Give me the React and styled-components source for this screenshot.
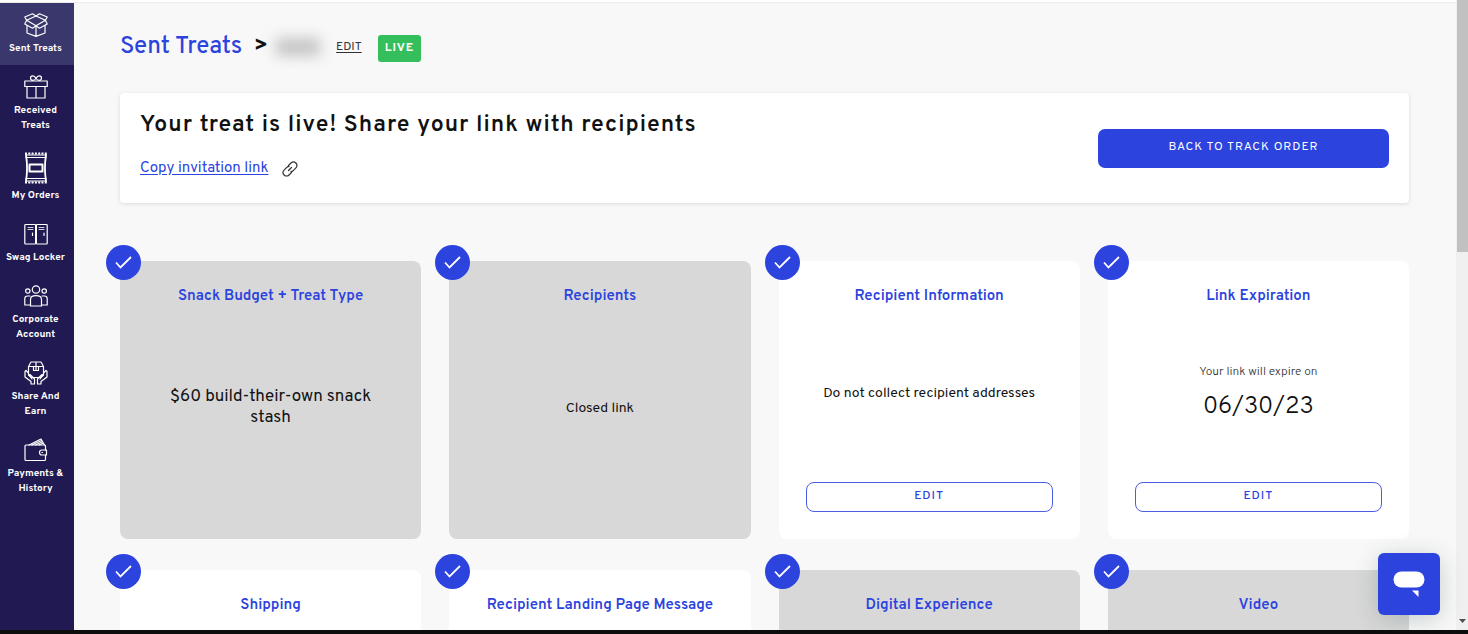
import React from 'react';
import styled, { createGlobalStyle } from 'styled-components';

const GlobalStyle = createGlobalStyle`
  * {
    box-sizing: border-box;
  }

  body {
    margin: 0;
    background: #f8f8f8;
    color: #111;
    font-family: Overpass, Roboto, "Liberation Sans", sans-serif;
  }

  h1, h2, p {
    margin: 0;
  }

  button {
    font-family: inherit;
    cursor: pointer;
  }
`;

const Screen = styled.div`
  display: grid;
  grid-template-columns: minmax(0, 1fr) 12px;
  grid-template-rows: minmax(0, 1fr) 4px;
  height: 100vh;
  overflow: hidden;
`;

const Page = styled.div`
  display: flex;
  flex-direction: column;
  min-height: 0;
`;

const TopLine = styled.div`
  flex: none;
  height: 3px;
  background: #fff;
  border-bottom: 1px solid #ececec;
`;

const Columns = styled.div`
  display: flex;
  flex: 1;
  min-height: 0;
`;

const BottomBar = styled.div`
  grid-column: 1 / -1;
  background: #0d0d0d;
`;

// Scrollbar
const ScrollTrack = styled.div`
  display: flex;
  flex-direction: column;
  justify-content: space-between;
  align-items: center;
  padding-left: 1px;
  background: #f0f0f0;
`;

const ScrollThumb = styled.div`
  width: 100%;
  height: 40%;
  background: #c1c1c1;
`;

const ScrollArrow = styled.svg`
  width: 7px;
  height: 4px;
  margin-bottom: 7px;
  fill: #505050;
`;

// Sidebar
const Sidebar = styled.nav`
  flex: none;
  width: 74px;
  background: #211a52;
`;

const SideLink = styled.a`
  display: flex;
  flex-direction: column;
  align-items: center;
  gap: 4px;
  padding: 10px 3px 9px 0;
  background: ${(props) => (props.$active ? '#39376b' : 'transparent')};
  color: #fff;
  font-size: 10px;
  font-weight: 700;
  line-height: 15px;
  text-align: center;
  text-decoration: none;
`;

const SideIcon = styled.svg`
  width: 24px;
  height: ${(props) => (props.$tall ? '32px' : '24px')};
  fill: none;
  stroke: #fff;
  stroke-width: 1.2;
  stroke-linejoin: round;
  stroke-linecap: round;
`;

// Main area
const Main = styled.main`
  flex: 1;
  min-width: 0;
  overflow: hidden;
  padding: 30px 47px 0 46px;
`;

const Header = styled.header`
  display: flex;
  align-items: flex-start;
  height: 30px;
  margin-bottom: 30px;
  line-height: 28px;
`;

const Crumb = styled.a`
  color: #2c43de;
  font-size: 24px;
  font-weight: 500;
  text-decoration: none;
`;

const Separator = styled.span`
  margin: 0 8px 0 12px;
  font-size: 22px;
  font-weight: 700;
`;

const HiddenName = styled.span`
  width: 44px;
  height: 18px;
  margin: 5px 16px 0 0;
  background: #c4c4c4;
  filter: blur(7px);
`;

const EditName = styled.a`
  color: #333;
  font-size: 12px;
  text-decoration: underline;
  text-underline-offset: 2px;
`;

const LiveTag = styled.span`
  margin: 2px 0 0 16px;
  padding: 1px 7px;
  border-radius: 3px;
  background: #35bf5c;
  color: #fff;
  font-size: 12px;
  font-weight: 700;
  letter-spacing: 1px;
  line-height: 25px;
`;

const Banner = styled.section`
  display: flex;
  align-items: center;
  justify-content: space-between;
  margin-bottom: 58px;
  padding: 0 20px;
  border-radius: 4px;
  background: #fff;
  box-shadow: 0 1px 4px rgba(0, 0, 0, 0.12);
`;

const BannerText = styled.div`
  padding: 18px 0 22px;
`;

const BannerTitle = styled.h1`
  margin-bottom: 16px;
  font-size: 23px;
  font-weight: 600;
  letter-spacing: 1px;
  line-height: 30px;
`;

const CopyRow = styled.div`
  display: flex;
  align-items: center;
  gap: 14px;
  line-height: 24px;
`;

const CopyLink = styled.a`
  color: #2c43de;
  font-size: 15px;
  text-decoration: underline;
  text-underline-offset: 2px;
`;

const ChainIcon = styled.svg`
  width: 16px;
  height: 16px;
  fill: none;
  stroke: #333;
  stroke-width: 1.2;
  stroke-linecap: round;
`;

const PrimaryButton = styled.button`
  width: 291px;
  height: 39px;
  padding: 0 0 2px;
  border: 0;
  border-radius: 7px;
  background: #2c43de;
  color: #fff;
  font-size: 12px;
  font-weight: 400;
  letter-spacing: 1px;
`;

const CardGrid = styled.div`
  display: grid;
  grid-template-columns: repeat(4, minmax(0, 1fr));
  grid-auto-rows: 278px;
  gap: 31px 28px;
`;

const Card = styled.section`
  position: relative;
  display: flex;
  flex-direction: column;
  padding: 25px 27px 27px;
  border-radius: 8px;
  background: ${(props) => (props.$locked ? '#d8d8d8' : '#fff')};
  text-align: center;
`;

const CheckBadge = styled.span`
  position: absolute;
  top: -16px;
  left: -14px;
  display: flex;
  align-items: center;
  justify-content: center;
  width: 35px;
  height: 35px;
  border-radius: 50%;
  background: #2c43de;
`;

const CheckIcon = styled.svg`
  width: 17px;
  height: 13px;
  fill: none;
  stroke: #fff;
  stroke-width: 1.8;
`;

const CardTitle = styled.h2`
  color: #2c43de;
  font-size: 15px;
  font-weight: 600;
  line-height: 22px;
`;

const CardBody = styled.div`
  display: flex;
  flex: 1;
  flex-direction: column;
  align-items: center;
  justify-content: center;
  gap: 10px;
  padding: 0 8px 4px;
`;

const CardText = styled.p`
  font-size: ${(props) => props.$size || 14}px;
  line-height: 21px;
`;

const Note = styled.p`
  color: #333;
  font-size: 12px;
  font-weight: 300;
  line-height: 18px;
`;

const DateText = styled.p`
  font-size: 24px;
  font-weight: 300;
  line-height: 32px;
`;

const OutlineButton = styled.button`
  flex: none;
  height: 30px;
  padding: 0 0 3px;
  border: 1px solid #4a5de3;
  border-radius: 8px;
  background: #fff;
  color: #2c43de;
  font-size: 12px;
  font-weight: 500;
  letter-spacing: 1px;
`;

const ChatButton = styled.button`
  position: fixed;
  right: 28px;
  bottom: 19px;
  display: flex;
  align-items: center;
  justify-content: center;
  width: 62px;
  height: 62px;
  padding: 0;
  border: 0;
  border-radius: 6px;
  background: #2c43de;
  box-shadow: 0 4px 24px rgba(0, 40, 40, 0.2);
`;

const ChatIcon = styled.svg`
  width: 32px;
  height: 26px;
  fill: #fff;
`;

const navItems = [
  {
    label: 'Sent Treats',
    active: true,
    icon: (
      <>
        <path d="M2.600 7.300 12 3l9.400 4.300L12 12.700z" />
        <path d="M2.600 7.300.8 4 8.500.8 12 3 15.500.8 23.200 4l-1.800 3.300L23.200 11l-7.700 4.200L12 12.700l-3.500 2.500L.8 11z" />
        <path d="M3 12.500V20l9 3.400 9-3.400v-7.500M12 12.700v10.700" />
      </>
    ),
  },
  {
    label: 'Received Treats',
    icon: (
      <>
        <rect x="0.800" y="6" width="22.400" height="5.500" />
        <path d="M3 11.500V23h18V11.500M12 11.500V23" />
        <path d="M12 3.500C11 1.500 9.800.9 8.700.9a2.200 2.200 0 0 0 0 4.400C10 5.300 11 4.800 12 3.500c1-2 2.200-2.600 3.300-2.600a2.200 2.200 0 0 1 0 4.400C14 5.300 13 4.800 12 3.500z" />
      </>
    ),
  },
  {
    label: 'My Orders',
    tall: true,
    icon: (
      <>
        <path d="M1 1.500h22M1 30.500h22" strokeWidth="2" strokeDasharray="2 1.300" strokeLinecap="butt" />
        <path d="M2 3h20M2 5.500h20M2 26.500h20M2 29h20" />
        <path d="M2 3c1.300 8 1.300 18 0 26M22 3c-1.300 8-1.300 18 0 26" strokeWidth="1.800" />
        <rect x="5.500" y="12.500" width="13" height="7" strokeWidth="2" />
      </>
    ),
  },
  {
    label: 'Swag Locker',
    icon: (
      <>
        <rect x="0.800" y="2.500" width="10.800" height="19.500" rx="0.800" />
        <rect x="12.400" y="2.500" width="10.800" height="19.500" rx="0.800" />
        <path d="M4 5.500h5M4 7.500h5M15 5.500h5M15 7.500h5" strokeWidth="0.800" />
        <path d="M8.500 11v2.500M20 11v2.500" />
      </>
    ),
  },
  {
    label: 'Corporate Account',
    icon: (
      <>
        <circle cx="12" cy="5.500" r="3.700" />
        <circle cx="3.800" cy="7" r="2.200" />
        <circle cx="20.200" cy="7" r="2.200" />
        <path d="M6.500 22v-6.500c0-2.500 2-3.800 5.500-3.800s5.500 1.300 5.500 3.800V22zM6 12H3.500C1.800 12 .8 13 .8 14.500V21h5.700M18 12h2.500c1.700 0 2.700 1 2.700 2.500V21h-5.700" />
      </>
    ),
  },
  {
    label: 'Share And Earn',
    icon: (
      <>
        <path d="M4.500 5.500 7 1h10l2.500 4.500V14l-3 2.500h-9l-3-2.500zM4.500 5.500h15M9.500 5.500v4h5v-4M12 1v8" />
        <path d="M4.500 12 2 9.500l-1 1V16l6 4.500V23h3.500v-5L6 13.500 5 14l3 4M19.500 12 22 9.500l1 1V16l-6 4.500V23h-3.500v-5l4.500-4.500 1 .5-3 4" />
      </>
    ),
  },
  {
    label: 'Payments & History',
    icon: (
      <>
        <path d="M21.500 12V8c0-.5-.5-1-1-1H2c-.5 0-1 .5-1 1v13.500c0 .5.500 1 1 1h18.500c.5 0 1-.5 1-1V17" />
        <path d="M5 7 17 1l3.500 6M8 7l9.500-4.500M11.500 7 18 4M15 7l3.500-1.500" />
        <path d="M22.500 12H18a2.500 2.500 0 0 0 0 5h4.500zM18 14.500h.5" />
      </>
    ),
  },
];

const cards = [
  { title: 'Snack Budget + Treat Type', locked: true, text: '$60 build-their-own snack stash', size: 17 },
  { title: 'Recipients', locked: true, text: 'Closed link' },
  { title: 'Recipient Information', text: 'Do not collect recipient addresses', editable: true },
  { title: 'Link Expiration', note: 'Your link will expire on', date: '06/30/23', editable: true },
  { title: 'Shipping' },
  { title: 'Recipient Landing Page Message' },
  { title: 'Digital Experience', locked: true },
  { title: 'Video', locked: true },
];

const TreatCard = ({ card }) => (
  <Card $locked={card.locked}>
    <CheckBadge>
      <CheckIcon viewBox="0 0 17 13" aria-hidden="true">
        <path d="M1 6.500 5.500 11.500 16 1" />
      </CheckIcon>
    </CheckBadge>
    <CardTitle>{card.title}</CardTitle>
    <CardBody>
      {card.text && <CardText $size={card.size}>{card.text}</CardText>}
      {card.note && <Note>{card.note}</Note>}
      {card.date && <DateText>{card.date}</DateText>}
    </CardBody>
    {card.editable && <OutlineButton type="button">EDIT</OutlineButton>}
  </Card>
);

const App = () => {
  return (
    <>
      <GlobalStyle />
      <Screen>
        <Page>
          <TopLine />
          <Columns>
            <Sidebar>
              {navItems.map((item) => (
                <SideLink key={item.label} href="#" $active={item.active}>
                  <SideIcon $tall={item.tall} viewBox={item.tall ? '0 0 24 32' : '0 0 24 24'} aria-hidden="true">
                    {item.icon}
                  </SideIcon>
                  {item.label}
                </SideLink>
              ))}
            </Sidebar>

            <Main>
              <Header>
                <Crumb href="#">Sent Treats</Crumb>
                <Separator>&gt;</Separator>
                <HiddenName aria-hidden="true" />
                <EditName href="#">EDIT</EditName>
                <LiveTag>LIVE</LiveTag>
              </Header>

              <Banner>
                <BannerText>
                  <BannerTitle>Your treat is live! Share your link with recipients</BannerTitle>
                  <CopyRow>
                    <CopyLink href="#">Copy invitation link</CopyLink>
                    <ChainIcon viewBox="0 0 16 16" aria-hidden="true">
                      <path d="M6.500 4.500 9 2a3.400 3.400 0 0 1 4.900 4.900L11 9.800a3.400 3.400 0 0 1-2 .9" />
                      <path d="M9.500 11.500 7 14a3.400 3.400 0 0 1-4.900-4.900L5 6.200a3.400 3.400 0 0 1 2-.9" />
                      <path d="M6.500 9.500l3-3" />
                    </ChainIcon>
                  </CopyRow>
                </BannerText>
                <PrimaryButton type="button">BACK TO TRACK ORDER</PrimaryButton>
              </Banner>

              <CardGrid>
                {cards.map((card) => (
                  <TreatCard key={card.title} card={card} />
                ))}
              </CardGrid>
            </Main>
          </Columns>
        </Page>

        <ScrollTrack aria-hidden="true">
          <ScrollThumb />
          <ScrollArrow viewBox="0 0 7 4">
            <path d="M0 0h7L3.500 4z" />
          </ScrollArrow>
        </ScrollTrack>
        <BottomBar />
      </Screen>

      <ChatButton type="button" aria-label="Chat">
        <ChatIcon viewBox="0 0 32 26">
          <rect x="0.500" y="0.500" width="31" height="16" rx="8" />
          <path d="M19 19.500h6.500v6.500z" />
        </ChatIcon>
      </ChatButton>
    </>
  );
};

export default App;
